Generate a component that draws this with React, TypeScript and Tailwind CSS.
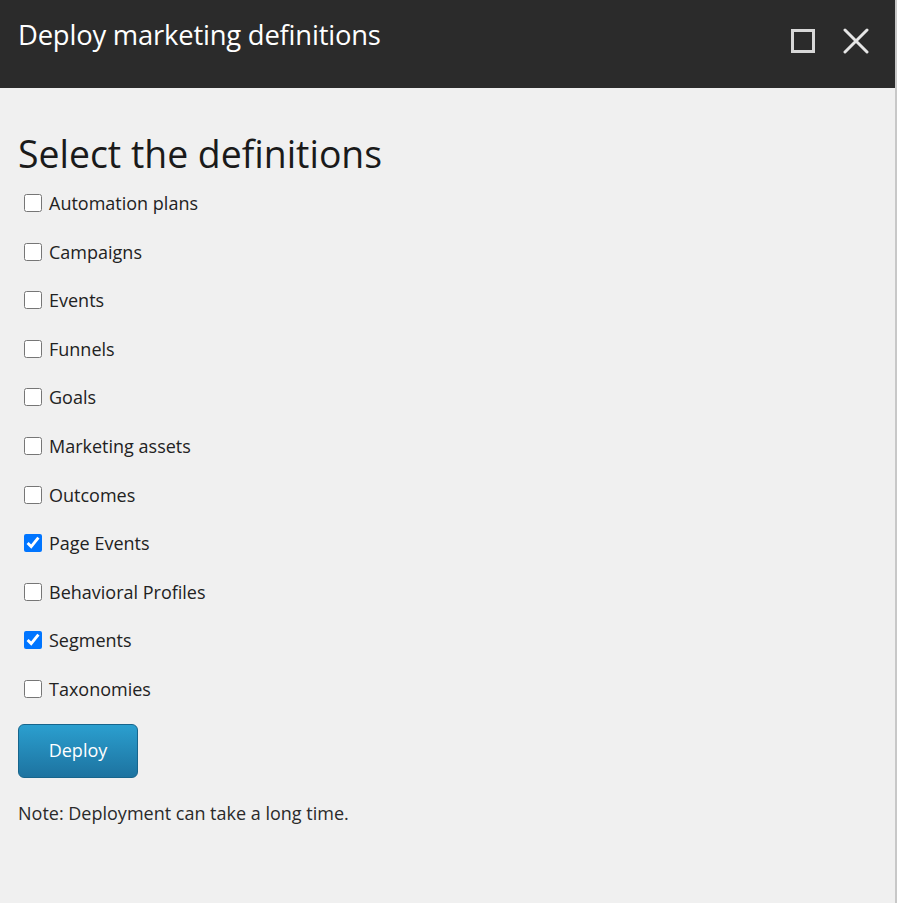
import { useState } from "react";

const ITEMS = [
  { label: "Automation plans", checked: false },
  { label: "Campaigns", checked: false },
  { label: "Events", checked: false },
  { label: "Funnels", checked: false },
  { label: "Goals", checked: false },
  { label: "Marketing assets", checked: false },
  { label: "Outcomes", checked: false },
  { label: "Page Events", checked: true },
  { label: "Behavioral Profiles", checked: false },
  { label: "Segments", checked: true },
  { label: "Taxonomies", checked: false },
];

export default function App() {
  const [items, setItems] = useState(ITEMS);

  const toggle = (i: number) =>
    setItems((prev) => prev.map((it, j) => (j === i ? { ...it, checked: !it.checked } : it)));

  return (
    <div
      className="w-[897px] h-[903px] flex bg-[#f0f0f0] text-[#222]"
      style={{ fontFamily: '"Open Sans", "Noto Sans", sans-serif' }}
    >
      <div className="flex-1 flex flex-col">
        <header className="h-[88px] bg-[#2b2b2b] flex items-start justify-between pl-[18px] pr-[26px] pt-[16px]">
          <h1 className="text-[27.4px] leading-[38px] text-white tracking-[-0.2px]">Deploy marketing definitions</h1>
          <div className="flex items-center gap-[28px] mt-[12px]">
            <button className="w-[24px] h-[24px] border-[3px] border-[#d8d8d8]" aria-label="Maximize" />
            <button aria-label="Close">
              <svg width="26" height="26" viewBox="0 0 26 26">
                <path d="M2 2 L24 24 M24 2 L2 24" stroke="#e6e6e6" strokeWidth="3" strokeLinecap="round" />
              </svg>
            </button>
          </div>
        </header>
        <main className="flex-1 px-[18px] pt-[40px]">
          <h2 className="text-[37.4px] leading-[52px] text-[#1a1a1a] mb-[11px]">Select the definitions</h2>
          <div className="flex flex-col">
            {items.map((it, i) => (
              <label key={it.label} className="h-[48.6px] flex items-start gap-[7px] pl-[6px] text-[18px] leading-[24px]">
                <input
                  type="checkbox"
                  checked={it.checked}
                  onChange={() => toggle(i)}
                  className="w-[18px] h-[18px] m-0 mt-[3px] accent-[#0075ff]"
                />
                <span>{it.label}</span>
              </label>
            ))}
          </div>
          <button className="mt-[-2px] w-[120px] h-[54px] rounded-[6px] border border-[#17658c] bg-gradient-to-b from-[#2b9fcf] to-[#1d73a0] text-white text-[18px]">
            Deploy
          </button>
          <p className="mt-[23px] text-[18px] leading-[24px] text-[#2a2a2a]">Note: Deployment can take a long time.</p>
        </main>
      </div>
      <div className="w-[2px] bg-[#c8c8c8]" />
    </div>
  );
}
